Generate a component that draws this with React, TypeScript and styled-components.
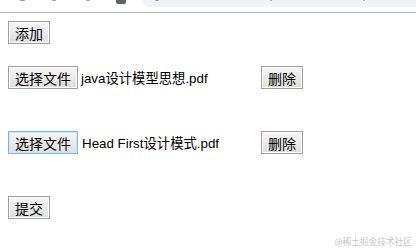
import React from 'react';
import styled, { createGlobalStyle } from 'styled-components';

const GlobalStyle = createGlobalStyle`
  html, body {
    margin: 0;
    padding: 0;
    background: #fff;
  }
  body {
    font-family: Arial, "Liberation Sans", "Noto Sans CJK SC", sans-serif;
    font-size: 13.33px;
    color: #000;
  }
`;

const Page = styled.div`
  position: relative;
  width: 416px;
  height: 251px;
  overflow: hidden;
  background: #fff;
`;

const Chrome = styled.div`
  display: flex;
  height: 12px;
  border-bottom: 1px solid #bababa;
  box-sizing: content-box;
`;

const ChromeIcons = styled.div`
  display: flex;
  align-items: flex-start;
  width: 142px;
  height: 12px;
`;

const IconStub = styled.span<{ $left: number; $w: number; $h: number; $dark?: boolean }>`
  display: block;
  flex: none;
  margin-left: ${(p) => p.$left}px;
  width: ${(p) => p.$w}px;
  height: ${(p) => p.$h}px;
  background: ${(p) => (p.$dark ? '#5f6368' : '#9aa0a6')};
  border-radius: 0 0 2px 2px;
`;

const AddressBar = styled.div`
  flex: 1;
  height: 7px;
  background: #f1f3f4;
  border-bottom-left-radius: 8px;
  display: flex;
  align-items: flex-start;
`;

const Content = styled.div`
  display: flex;
  flex-direction: column;
  align-items: flex-start;
  padding: 8px 8px 0;
`;

const Button = styled.button<{ $focused?: boolean }>`
  font-family: "Noto Sans CJK SC", "Liberation Sans", sans-serif;
  font-size: 14px;
  line-height: 16px;
  color: #000;
  height: 23px;
  padding: 0 6px;
  margin: 0;
  border: 1px solid ${(p) => (p.$focused ? '#7eb4ea' : '#a0a0a0')};
  border-radius: 0;
  background: linear-gradient(#f6f6f6, #dedede);
  box-shadow: ${(p) => (p.$focused ? 'inset 0 0 0 1px #cde3f7' : 'inset 0 0 0 1px #fcfcfc')};
  cursor: default;
`;

const FileRow = styled.div<{ $top: number }>`
  display: flex;
  align-items: center;
  margin-top: ${(p) => p.$top}px;
  height: 23px;
`;

const FileField = styled.div`
  display: flex;
  align-items: center;
  width: 253px;
`;

const FileName = styled.span<{ $indent: number }>`
  margin-left: ${(p) => p.$indent}px;
  font-family: Arial, "Liberation Sans", "Noto Sans CJK SC", sans-serif;
  font-size: 13.33px;
  white-space: nowrap;
`;

const Watermark = styled.div`
  position: absolute;
  right: 4px;
  bottom: 3px;
  font-family: "Noto Sans CJK SC", sans-serif;
  font-size: 8.7px;
  color: #c8c8c8;
`;

const files = [
  { name: 'java设计模型思想.pdf', indent: 3, top: 22, focused: false },
  { name: 'Head First设计模式.pdf', indent: 4, top: 42, focused: true },
];

export default function App() {
  return (
    <Page>
      <GlobalStyle />
      <Chrome>
        <ChromeIcons>
          <IconStub $left={20} $w={5} $h={1} />
          <IconStub $left={27} $w={4} $h={1} />
          <IconStub $left={30} $w={4} $h={1} />
          <IconStub $left={26} $w={10} $h={4} $dark />
        </ChromeIcons>
        <AddressBar>
          <IconStub $left={13} $w={4} $h={1} />
          <IconStub $left={111} $w={2} $h={1} />
          <IconStub $left={91} $w={2} $h={1} />
        </AddressBar>
      </Chrome>
      <Content>
        <Button>添加</Button>
        {files.map((f) => (
          <FileRow key={f.name} $top={f.top}>
            <FileField>
              <Button $focused={f.focused}>选择文件</Button>
              <FileName $indent={f.indent}>{f.name}</FileName>
            </FileField>
            <Button>删除</Button>
          </FileRow>
        ))}
        <FileRow $top={42}>
          <Button>提交</Button>
        </FileRow>
      </Content>
      <Watermark>@稀土掘金技术社区</Watermark>
    </Page>
  );
}
